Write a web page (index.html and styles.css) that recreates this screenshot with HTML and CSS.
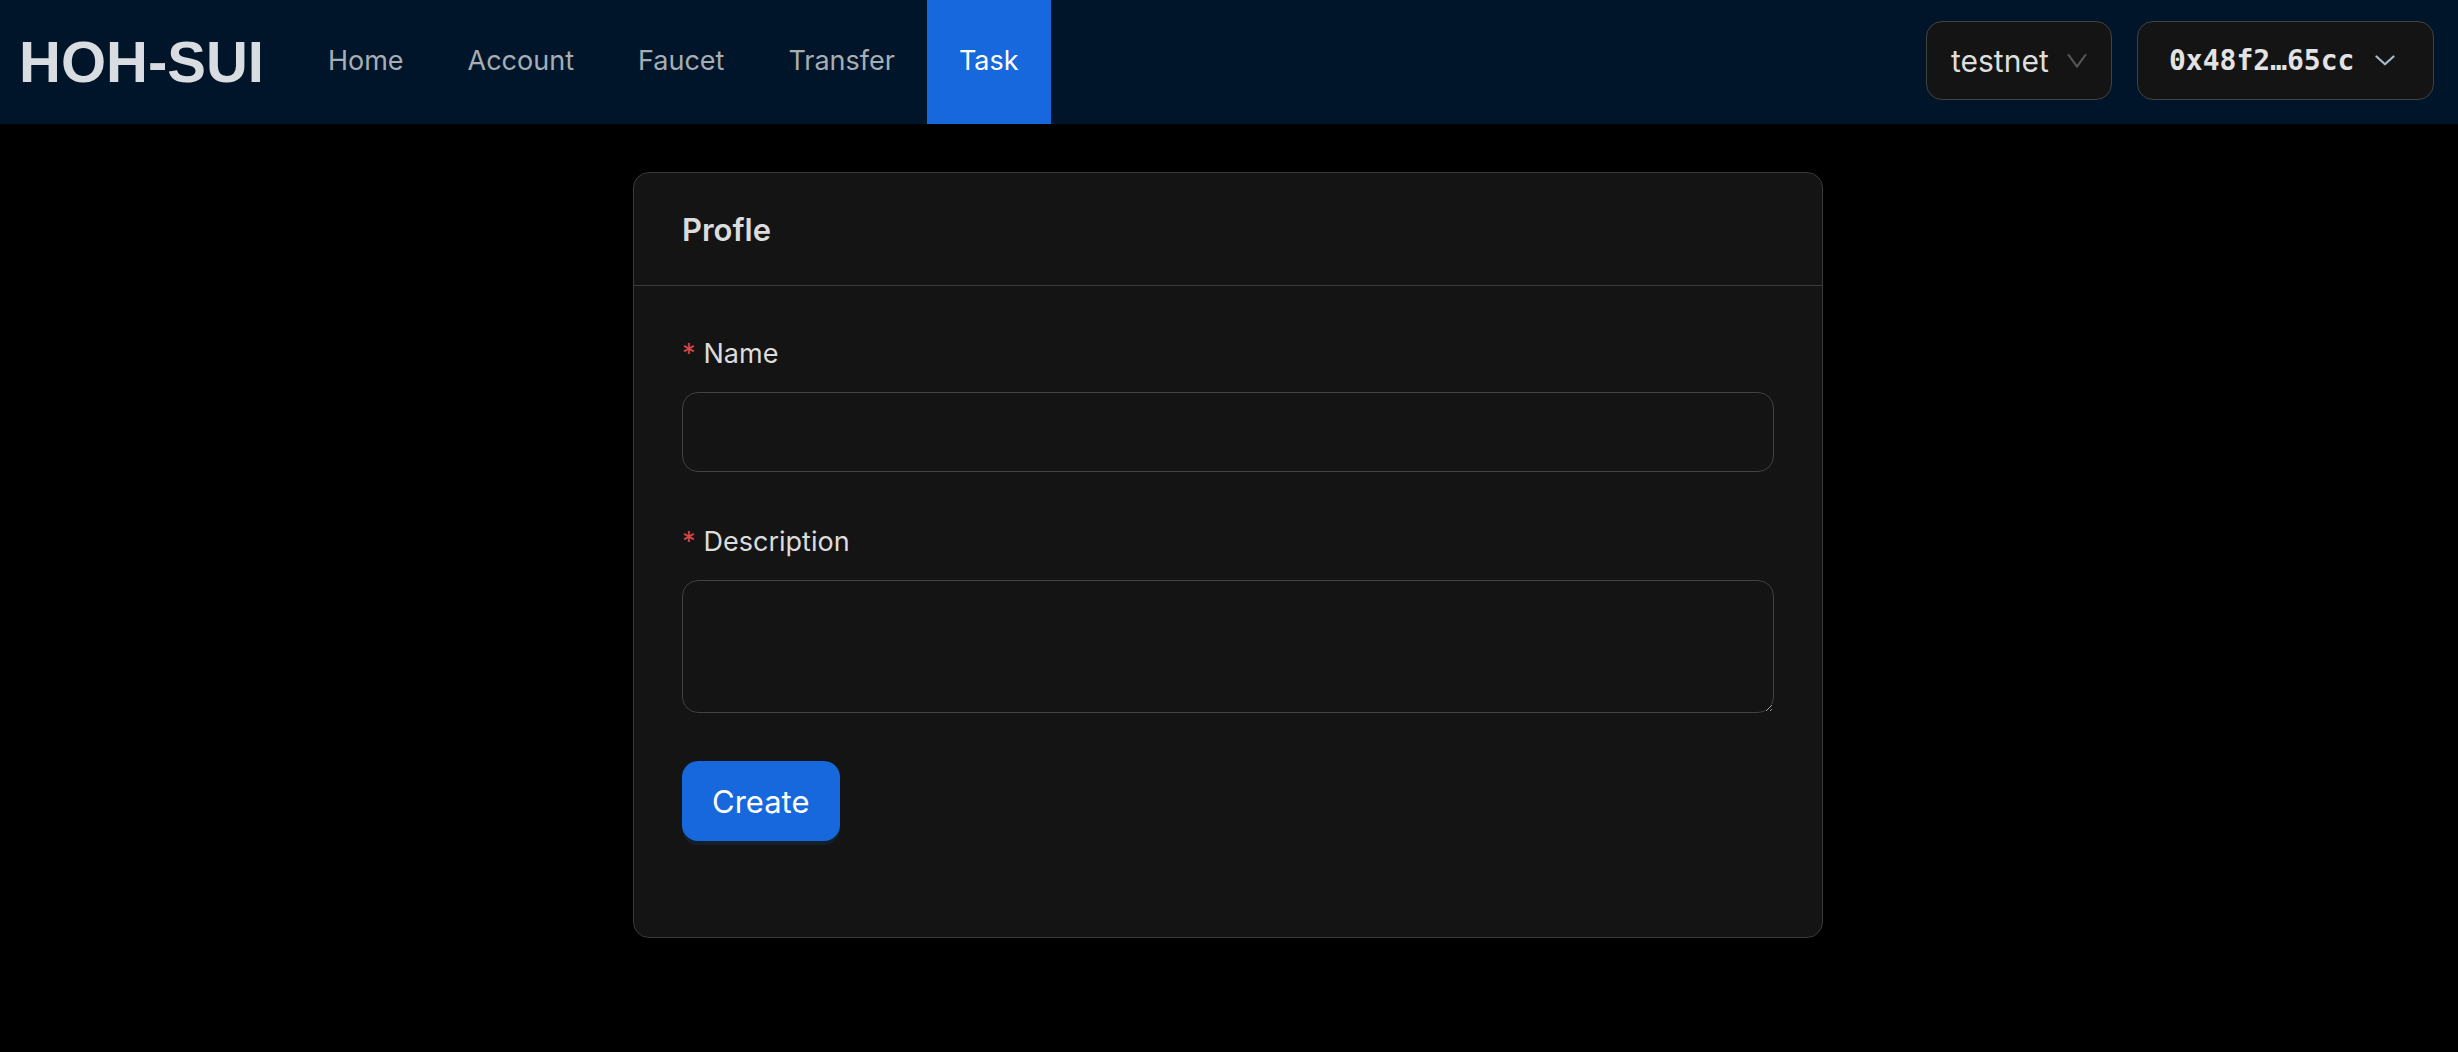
FILE: index.html
```html
<!DOCTYPE html>
<html lang="en">
<head>
<meta charset="utf-8">
<title>HOH-SUI</title>
<link rel="stylesheet" href="styles.css">
</head>
<body>
<header class="topbar">
  <div class="logo">HOH-SUI</div>
  <nav class="menu">
    <a class="menu-item">Home</a>
    <a class="menu-item">Account</a>
    <a class="menu-item">Faucet</a>
    <a class="menu-item">Transfer</a>
    <a class="menu-item active">Task</a>
  </nav>
  <div class="actions">
    <div class="net-select">
      <span class="net-value">testnet</span>
      <svg class="net-arrow" viewBox="133 256 757 512" width="20" height="14" aria-hidden="true"><path d="M884 256h-75c-5.1 0-9.9 2.5-12.9 6.6L512 654.2 227.9 262.6c-3-4.1-7.8-6.6-12.9-6.6h-75c-6.5 0-10.3 7.4-6.5 12.7l352.6 486.1c12.8 17.6 39 17.6 51.7 0l352.6-486.1c3.9-5.3.1-12.7-6.4-12.7z" fill="currentColor"/></svg>
    </div>
    <button class="wallet-btn" type="button">
      <span class="wallet-addr">0x48f2…65cc</span>
      <svg class="wallet-arrow" viewBox="0 0 20 11" width="20" height="11" aria-hidden="true"><path d="M1.5 1.5 L10 9.3 L18.5 1.5" fill="none" stroke="currentColor" stroke-width="2.2" stroke-linecap="round" stroke-linejoin="round"/></svg>
    </button>
  </div>
</header>
<main class="content">
  <section class="card">
    <div class="card-head">Profle</div>
    <form class="card-body">
      <div class="form-item">
        <label class="form-label"><span class="req">*</span>Name</label>
        <input class="input" type="text">
      </div>
      <div class="form-item">
        <label class="form-label"><span class="req">*</span>Description</label>
        <textarea class="textarea"></textarea>
      </div>
      <div class="form-item">
        <button class="btn-primary" type="button">Create</button>
      </div>
    </form>
  </section>
</main>
</body>
</html>
```
FILE: styles.css
```css
:root {
  color-scheme: dark;
}

* {
  box-sizing: border-box;
}

body {
  margin: 0;
  background: #000;
  font-family: Inter, "Noto Sans", sans-serif;
  color: #dcdcdc;
}

.topbar {
  display: flex;
  align-items: center;
  height: 124px;
  background: #001529;
  padding: 0 24px 0 19px;
}

.logo {
  font-family: "Liberation Sans", Arial, sans-serif;
  font-weight: 700;
  font-size: 58px;
  line-height: 1;
  color: #d9dce0;
}

.menu {
  display: flex;
  align-self: stretch;
  margin-left: 32px;
}

.menu-item {
  display: flex;
  align-items: center;
  padding: 0 32px 4px;
  font-size: 27px;
  color: #a6adb4;
  cursor: pointer;
}

.menu-item.active {
  background: #1668dc;
  color: #fff;
}

.actions {
  display: flex;
  align-items: center;
  gap: 25px;
  margin-left: auto;
  margin-bottom: 3px;
}

.net-select {
  display: flex;
  align-items: center;
  width: 186px;
  height: 79px;
  padding: 0 24px;
  background: #141414;
  border: 1px solid #424242;
  border-radius: 16px;
  font-size: 30px;
  color: #dedede;
}

.net-arrow {
  margin-left: auto;
  color: #555;
}

.wallet-btn {
  display: flex;
  align-items: center;
  width: 297px;
  height: 79px;
  padding: 0 38px 0 31px;
  background: #141414;
  border: 1px solid #424242;
  border-radius: 16px;
  font-family: "DejaVu Sans Mono", "Liberation Mono", monospace;
  font-weight: 700;
  font-size: 28px;
  color: #e3e3e3;
}

.wallet-arrow {
  margin-left: auto;
  color: #a3bccc;
}

.content {
  padding-top: 48px;
  padding-right: 2px;
}

.card {
  width: 1190px;
  margin: 0 auto;
  background: #141414;
  border: 1px solid #3a3a3a;
  border-radius: 16px;
}

.card-head {
  display: flex;
  align-items: center;
  min-height: 113px;
  padding: 0 48px;
  border-bottom: 1px solid #3a3a3a;
  font-size: 31px;
  font-weight: 600;
  color: #dcdcdc;
}

.card-body {
  padding: 46px 48px 48px;
}

.form-item {
  display: flex;
  flex-direction: column;
  align-items: flex-start;
  margin-bottom: 48px;
}

.form-label {
  display: block;
  line-height: 44px;
  padding-bottom: 16px;
  font-size: 27px;
  color: #dcdcdc;
}

.req {
  color: #dc4446;
  margin-right: 8px;
}

.input,
.textarea {
  display: block;
  width: 100%;
  background: #141414;
  border: 1px solid #424242;
  border-radius: 16px;
  font-family: inherit;
  font-size: 27px;
  color: #dcdcdc;
  padding: 8px 22px;
  outline: none;
}

.input {
  height: 80px;
}

.textarea {
  height: 133px;
  resize: both;
}

.btn-primary {
  height: 80px;
  padding: 0 30px;
  background: #1668dc;
  border: none;
  border-radius: 16px;
  box-shadow: 0 4px 0 rgba(5, 145, 255, 0.1);
  font-family: inherit;
  font-size: 31px;
  color: #fff;
  cursor: pointer;
}
```
